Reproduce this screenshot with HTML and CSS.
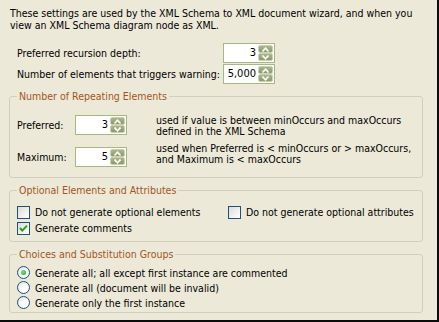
FILE: index.html
```html
<!DOCTYPE html>
<html>
<head>
<meta charset="utf-8">
<link rel="stylesheet" href="styles.css">
</head>
<body>
<div class="dialog">
  <p class="intro">These settings are used by the XML Schema to XML document wizard, and when you<br>view an XML Schema diagram node as XML.</p>

  <div class="top-rows">
    <div class="top-row">
      <span class="top-label">Preferred recursion depth:</span>
      <span class="spin"><span class="val">3</span><span class="btns"><span class="sb"><svg width="7" height="5" viewBox="0 0 7 5"><path d="M0.5 4.5 L3.5 1.2 L6.5 4.5" fill="none" stroke="#fff" stroke-width="1.6"/></svg></span><span class="sb"><svg width="7" height="5" viewBox="0 0 7 5"><path d="M0.5 0.5 L3.5 3.8 L6.5 0.5" fill="none" stroke="#fff" stroke-width="1.6"/></svg></span></span></span>
    </div>
    <div class="top-row">
      <span class="top-label">Number of elements that triggers warning:</span>
      <span class="spin"><span class="val">5,000</span><span class="btns"><span class="sb"><svg width="7" height="5" viewBox="0 0 7 5"><path d="M0.5 4.5 L3.5 1.2 L6.5 4.5" fill="none" stroke="#fff" stroke-width="1.6"/></svg></span><span class="sb"><svg width="7" height="5" viewBox="0 0 7 5"><path d="M0.5 0.5 L3.5 3.8 L6.5 0.5" fill="none" stroke="#fff" stroke-width="1.6"/></svg></span></span></span>
    </div>
  </div>

  <fieldset class="group g-repeat">
    <legend>Number of Repeating Elements</legend>
    <div class="rep-row">
      <div class="rep-ctl">
        <span class="rep-label">Preferred:</span>
        <span class="spin"><span class="val">3</span><span class="btns"><span class="sb"><svg width="7" height="5" viewBox="0 0 7 5"><path d="M0.5 4.5 L3.5 1.2 L6.5 4.5" fill="none" stroke="#fff" stroke-width="1.6"/></svg></span><span class="sb"><svg width="7" height="5" viewBox="0 0 7 5"><path d="M0.5 0.5 L3.5 3.8 L6.5 0.5" fill="none" stroke="#fff" stroke-width="1.6"/></svg></span></span></span>
      </div>
      <p class="rep-text">used if value is between minOccurs and maxOccurs<br>defined in the XML Schema</p>
    </div>
    <div class="rep-row second">
      <div class="rep-ctl">
        <span class="rep-label">Maximum:</span>
        <span class="spin"><span class="val">5</span><span class="btns"><span class="sb"><svg width="7" height="5" viewBox="0 0 7 5"><path d="M0.5 4.5 L3.5 1.2 L6.5 4.5" fill="none" stroke="#fff" stroke-width="1.6"/></svg></span><span class="sb"><svg width="7" height="5" viewBox="0 0 7 5"><path d="M0.5 0.5 L3.5 3.8 L6.5 0.5" fill="none" stroke="#fff" stroke-width="1.6"/></svg></span></span></span>
      </div>
      <p class="rep-text">used when Preferred is &lt; minOccurs or &gt; maxOccurs,<br>and Maximum is &lt; maxOccurs</p>
    </div>
  </fieldset>

  <fieldset class="group g-optional">
    <legend>Optional Elements and Attributes</legend>
    <div class="opt-grid">
      <label class="opt"><span class="cb"></span>Do not generate optional elements</label>
      <label class="opt"><span class="cb"></span>Do not generate optional attributes</label>
      <label class="opt"><span class="cb"><svg width="11" height="11" viewBox="0 0 11 11"><path d="M2 5 L4.3 7.6 L9 2.6" fill="none" stroke="#21A121" stroke-width="2"/></svg></span>Generate comments</label>
    </div>
  </fieldset>

  <fieldset class="group g-choices">
    <legend>Choices and Substitution Groups</legend>
    <label class="rad-row"><span class="rad on"></span>Generate all; all except first instance are commented</label>
    <label class="rad-row"><span class="rad"></span>Generate all (document will be invalid)</label>
    <label class="rad-row"><span class="rad"></span>Generate only the first instance</label>
  </fieldset>
</div>
</body>
</html>
```

FILE: styles.css
```css
html, body {
  margin: 0;
  padding: 0;
}
body {
  width: 439px;
  height: 322px;
  overflow: hidden;
  background: #ECE9D8;
  font-family: "DejaVu Sans Condensed", "DejaVu Sans", sans-serif;
  font-stretch: condensed;
  font-size: 10.5px;
  color: #000;
}
.dialog {
  box-sizing: border-box;
  width: 439px;
  height: 322px;
  border-right: 2px solid #0c0c0c;
  border-bottom: 2px solid #0c0c0c;
  background: #ECE9D8;
}
.intro {
  margin: 0;
  padding: 7px 0 0 10px;
  line-height: 12px;
  white-space: nowrap;
}
.top-rows {
  margin-top: 12px;
  padding-left: 17px;
  display: flex;
  flex-direction: column;
  gap: 1px;
}
.top-row {
  display: flex;
  align-items: center;
  height: 20px;
}
.top-label {
  width: 206px;
  white-space: nowrap;
}
.spin {
  box-sizing: border-box;
  display: inline-flex;
  width: 52px;
  height: 20px;
  border: 1px solid #A5B97E;
  background: #fff;
  padding: 1px;
}
.val {
  flex: 1;
  text-align: right;
  line-height: 16px;
  padding-right: 2px;
  font-size: 11px;
}
.btns {
  width: 15px;
  display: flex;
  flex-direction: column;
  gap: 0;
}
.sb {
  box-sizing: border-box;
  flex: 1;
  display: flex;
  align-items: center;
  justify-content: center;
  border: 1px solid #C9D1B0;
  border-radius: 2px;
  background: linear-gradient(#AAB78C, #8B9A6A);
}
.group {
  margin: 0 14px 0 9px;
  border: 1px solid #D0D0BF;
  border-radius: 3px;
  padding: 0 7px;
}
.group legend {
  padding: 0 2px;
  line-height: 13px;
  color: #A2561C;
}
.g-repeat {
  margin-top: 6px;
  padding-top: 12px;
  padding-bottom: 10px;
}
.rep-row {
  display: flex;
  align-items: flex-start;
}
.rep-row.second {
  margin-top: 6px;
}
.rep-ctl {
  display: flex;
  align-items: center;
}
.rep-row.second .rep-ctl {
  margin-top: 4px;
}
.rep-label {
  width: 58px;
}
.rep-text {
  margin: 0 0 0 29px;
  line-height: 11px;
  white-space: nowrap;
}
.g-optional {
  margin-top: 6px;
  padding-top: 7px;
  padding-bottom: 5px;
}
.opt-grid {
  display: grid;
  grid-template-columns: 211px 1fr;
}
.opt {
  display: flex;
  align-items: center;
  height: 16px;
  white-space: nowrap;
}
.cb {
  box-sizing: border-box;
  width: 13px;
  height: 13px;
  border: 1px solid #1C5180;
  background: linear-gradient(135deg, #DCDCD4, #FFFFFF);
  margin-right: 5px;
  display: flex;
  align-items: center;
  justify-content: center;
}
.g-choices {
  margin-top: 6px;
  padding-top: 4px;
  padding-bottom: 2px;
}
.rad-row {
  display: flex;
  align-items: center;
  height: 15px;
  white-space: nowrap;
}
.rad {
  box-sizing: border-box;
  width: 13px;
  height: 13px;
  border-radius: 50%;
  border: 1px solid #1C5180;
  background: radial-gradient(circle at 65% 65%, #FFFFFF 30%, #DCDCD4 100%);
  margin-right: 5px;
  display: flex;
  align-items: center;
  justify-content: center;
}
.rad.on::after {
  content: "";
  width: 5px;
  height: 5px;
  border-radius: 50%;
  background: radial-gradient(circle at 40% 40%, #7BE07B, #21A121);
}
```
